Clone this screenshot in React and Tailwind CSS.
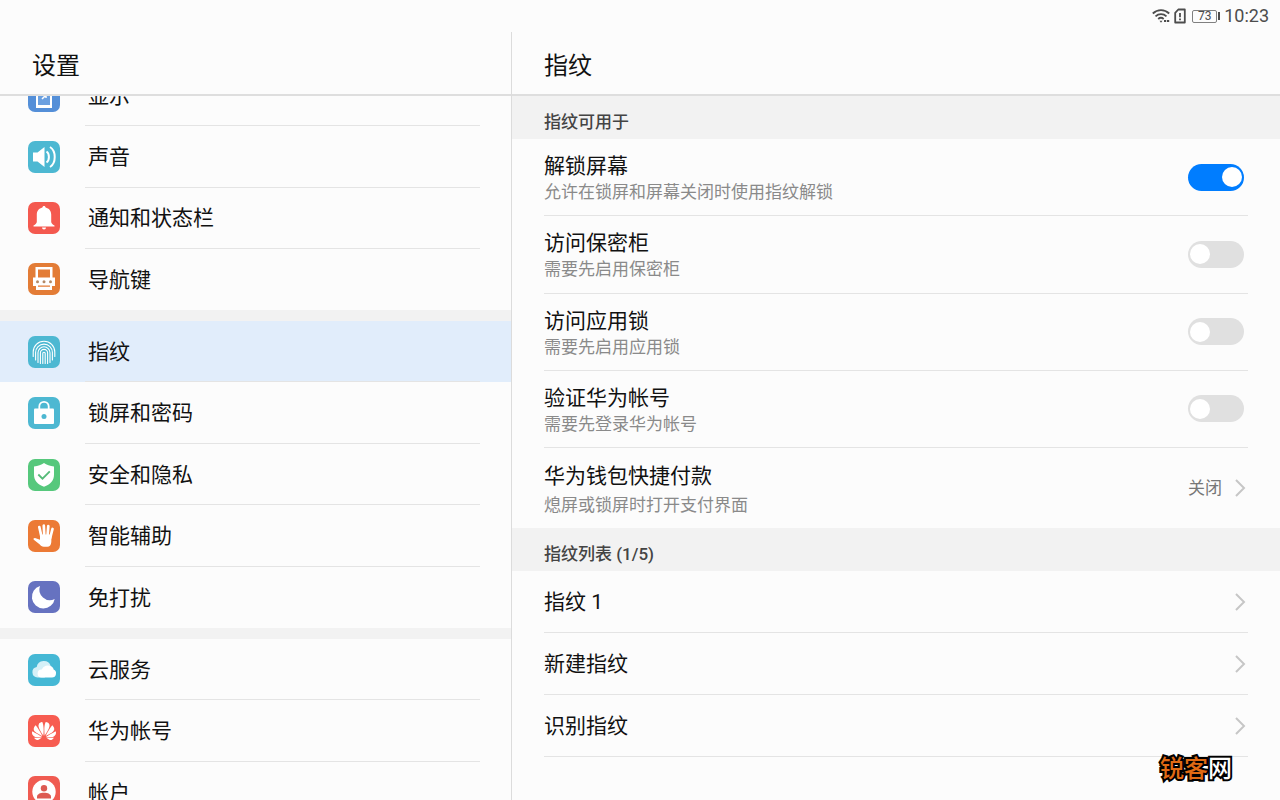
import { SiHuawei } from 'react-icons/si';
import clsx from 'clsx';

const icons = {
    display: (
        <>
            <path d="M8 4h16v24H8z" fill="#fff" />
            <path d="M10 6h12v19H10z" fill="#6ba0e0" />
            <path d="M14 19l4-4v3" stroke="#fff" strokeWidth="1.5" />
        </>
    ),
    sound: (
        <>
            <path d="M5 11.5h4.500L16.500 6v20L9.500 20.500H5z" fill="#fff" />
            <path d="M18.500 10.500c3.200 2 3.200 9 0 11M22 6c6.300 4 6.300 16 0 20" stroke="#fff" strokeWidth="2" />
        </>
    ),
    bell: (
        <g fill="#fff">
            <path d="M16 4c.9 0 1.500.7 1.600 1.600 3.500.8 5.600 3.400 5.600 7v7.200c0 1.600 1.200 2.600 3.300 3.700v1H5.500v-1c2.100-1.100 3.300-2.100 3.300-3.700v-7.200c0-3.600 2.100-6.200 5.600-7C14.500 4.700 15.100 4 16 4z" />
            <path d="M14 25.600h4a2 2 0 0 1-4 0z" />
        </g>
    ),
    keys: (
        <>
            <path d="M7.500 4h17v10.500H27V23h-3v4H8v-4H5v-8.500h2.500z" fill="#fff" />
            <path d="M10 6.500h12v8H10zM10 22.500h12v1.200H10z" fill="#e37c36" />
            <g fill="#b58a66">
                <circle cx="9.500" cy="18.700" r="1.500" />
                <circle cx="16" cy="18.700" r="1.500" />
                <circle cx="22.500" cy="18.700" r="1.500" />
            </g>
        </>
    ),
    fingerprint: (
        <path
            d="M5.200 20.500V16a10.800 10.800 0 0 1 21.600 0v4.500M7.600 24v-7.500a8.400 8.400 0 0 1 16.800 0V24M10 26.500v-9.700a6 6 0 0 1 12 0v9.700M12.400 27.500V17a3.600 3.600 0 0 1 7.200 0v10.500M14.800 27.500V17.500a1.200 1.200 0 0 1 2.400 0v10"
            stroke="#fff"
            strokeWidth="1.100"
            strokeLinecap="round"
        />
    ),
    lock: (
        <>
            <rect x="6" y="11.500" width="20" height="15.500" rx="1" fill="#fff" />
            <path d="M11.300 12V9.500a4.700 4.700 0 0 1 9.400 0V12" stroke="#fff" strokeWidth="1.800" />
            <circle cx="16" cy="19.600" r="2.500" fill="#4db8d2" />
        </>
    ),
    shield: (
        <>
            <path d="M16 4c2.500 2 6 3 10 3.400v8.200c0 6-3.600 10-10 12.200-6.400-2.200-10-6.200-10-12.200V7.400C10 7 13.500 6 16 4z" fill="#fff" />
            <path d="M10.300 15.500l4.200 4.200 7.300-7.400" stroke="#56bb79" strokeWidth="1.800" />
        </>
    ),
    hand: (
        <g stroke="#fff" strokeLinecap="round">
            <path d="M11.300 7l2 9M15.800 5.700l.5 10M20.300 6.200l-.8 10M24.500 9l-2.300 9" strokeWidth="2.700" />
            <path
                d="M12 14.500h11.500l-.2 7.500c-.2 3-1.500 4.700-4 4.700h-3.500c-2 0-3-.9-4.300-2.500l-5.700-4.500c-.8-.8 0-1.800 1.200-1.700l5 1.800z"
                fill="#fff"
                stroke="none"
            />
        </g>
    ),
    moon: <path d="M12 5A11.500 11.500 0 1 0 26.700 18 10.600 10.600 0 0 1 12 5z" fill="#fff" />,
    cloud: (
        <>
            <path d="M9.500 23.500a5.300 5.300 0 0 1-.8-10.500 7.200 7.200 0 0 1 14-1l-6 11.500z" fill="#d5f0f7" />
            <path d="M13.500 23.500a4 4 0 0 1 .2-8 6.800 6.800 0 0 1 9.500-3.200c1.500.8 2.200 1.900 2.400 3.200a4.200 4.200 0 0 1-1.600 8z" fill="#fff" />
        </>
    ),
    account: (
        <>
            <circle cx="16" cy="15.800" r="11.700" fill="#fff" />
            <circle cx="16" cy="12.300" r="3.200" fill="#dd5a52" />
            <path d="M9 22.500v-1.700c0-2.500 3-4 7-4s7 1.500 7 4v1.700z" fill="#dd5a52" />
        </>
    ),
};

const groups = [
    {
        height: 'min-h-[245px]',
        items: [
            { label: '显示', icon: 'display', color: 'bg-[#548fd8]' },
            { label: '声音', icon: 'sound', color: 'bg-[#4db8d2]' },
            { label: '通知和状态栏', icon: 'bell', color: 'bg-[#f4594f]' },
            { label: '导航键', icon: 'keys', color: 'bg-[#e37c36]' },
        ],
    },
    {
        height: 'min-h-[307px]',
        items: [
            { label: '指纹', icon: 'fingerprint', color: 'bg-[#4db8d2]', active: true },
            { label: '锁屏和密码', icon: 'lock', color: 'bg-[#4db8d2]' },
            { label: '安全和隐私', icon: 'shield', color: 'bg-[#56c87c]' },
            { label: '智能辅助', icon: 'hand', color: 'bg-[#ec7a35]' },
            { label: '免打扰', icon: 'moon', color: 'bg-[#6672c0]' },
        ],
    },
    {
        height: 'min-h-[184px]',
        items: [
            { label: '云服务', icon: 'cloud', color: 'bg-[#45b8d5]' },
            { label: '华为帐号', icon: 'huawei', color: 'bg-[#f75c51]' },
            { label: '帐户', icon: 'account', color: 'bg-[#f05b51]' },
        ],
    },
];

const switches = [
    { id: 'unlock', title: '解锁屏幕', hint: '允许在锁屏和屏幕关闭时使用指纹解锁', on: true },
    { id: 'safe', title: '访问保密柜', hint: '需要先启用保密柜' },
    { id: 'applock', title: '访问应用锁', hint: '需要先启用应用锁' },
    { id: 'account', title: '验证华为帐号', hint: '需要先登录华为帐号' },
];

function StatusBar() {
    return (
        <div className="flex h-8 shrink-0 items-center justify-end pr-[11px] text-[#4d4d4d]">
            <svg className="h-4 w-[18px]" viewBox="0 0 18 16" fill="none" stroke="currentColor" strokeWidth="1.800">
                <path d="M.8 5.500c4.700-4.600 11.700-4.600 16.400 0M3.500 8.300c3.200-3 7.800-3 11 0M6.200 11c1.700-1.500 3.800-1.500 5.500 0" />
                <path d="M7.500 12.800h3l-1.500 2z" fill="currentColor" stroke="none" />
                <path d="M12 13h2.200M15 13h2.200" strokeWidth="2" />
            </svg>
            <svg className="ml-1 h-4 w-3" viewBox="0 0 12 16" fill="none" stroke="currentColor" strokeWidth="1.800">
                <path d="M4.300 1.500H10.800v13H1.200V4.800z" strokeLinejoin="round" />
                <path d="M6 5v4.300M6 10.500v1.700" />
            </svg>
            <div className="ml-[6px] flex items-center">
                <span className="flex h-[13px] w-[25px] items-center justify-center rounded-[2px] border border-[#808080] text-xs">73</span>
                <span className="ml-px h-2 w-[2px] bg-[#4d4d4d]" />
            </div>
            <span className="ml-1 text-lg leading-8">10:23</span>
        </div>
    );
}

function MenuItem({ item, last }) {
    return (
        <a href="#" className={clsx('flex flex-1 items-center pl-7', item.active && 'bg-[#e1edfb]')}>
            <span className={clsx('flex size-8 shrink-0 items-center justify-center rounded-[7px]', item.color)}>
                {item.icon === 'huawei' ? (
                    <SiHuawei className="size-6 text-white" />
                ) : (
                    <svg className="size-8" viewBox="0 0 32 32" fill="none">
                        {icons[item.icon]}
                    </svg>
                )}
            </span>
            <span
                className={clsx(
                    'mr-[31px] ml-[25px] flex flex-1 items-center self-stretch border-b pt-[3px] pl-[3px]',
                    last ? 'border-transparent' : 'border-[#e4e4e4]'
                )}
            >
                {item.label}
            </span>
        </a>
    );
}

function Sidebar() {
    return (
        <aside className="flex w-2/5 flex-col border-r border-[#dcdcdc]">
            <h1 className="flex h-16 shrink-0 items-center border-b-2 border-[#dedede] px-8 pt-[6px] text-2xl">设置</h1>
            <nav className="flex-1 overflow-hidden">
                {/* the list is scrolled down a little */}
                <div className="-mt-[31px] flex flex-col gap-[11px] bg-[#f2f2f2]">
                    {groups.map((group, i) => (
                        <div key={i} className={clsx('flex flex-col bg-[#fcfcfc]', group.height)}>
                            {group.items.map((item, n) => (
                                <MenuItem key={item.label} item={item} last={n === group.items.length - 1} />
                            ))}
                        </div>
                    ))}
                </div>
            </nav>
        </aside>
    );
}

function SectionTitle({ children }) {
    return (
        <h3 className="flex h-[43px] items-center bg-[#f2f2f2] px-8 pt-[10px] text-[17px] font-medium text-[#444]">{children}</h3>
    );
}

function Chevron() {
    return (
        <svg className="mr-[2px] h-5 w-3" viewBox="0 0 12 20" fill="none" stroke="#c6c6c6" strokeWidth="2">
            <path d="M2 2l8 8-8 8" />
        </svg>
    );
}

function SwitchRow({ row }) {
    return (
        <div className="flex flex-1 items-center justify-between border-b border-[#e4e4e4]">
            <label htmlFor={row.id} className="pt-[2px]">
                <span className="block leading-7">{row.title}</span>
                <span className="block text-[17px] leading-6 text-[#8a8a8a]">{row.hint}</span>
            </label>
            <input
                id={row.id}
                type="checkbox"
                role="switch"
                defaultChecked={row.on}
                className="mr-1 flex h-[27px] w-14 shrink-0 cursor-pointer appearance-none items-center rounded-full bg-[#e0e0e0] px-[2px] before:size-5 before:rounded-full before:bg-white checked:justify-end checked:bg-[#007dff]"
            />
        </div>
    );
}

function LinkRow({ label }) {
    return (
        <button className="flex h-[62px] w-full items-center justify-between border-b border-[#e4e4e4] text-left">
            <span className="pt-[2px]">{label}</span>
            <Chevron />
        </button>
    );
}

export default function App() {
    return (
        <div className="relative flex h-screen flex-col overflow-hidden bg-[#fcfcfc] font-['Roboto','Noto_Sans_CJK_SC',sans-serif] text-[21px] text-[#111]">
            <StatusBar />
            <div className="flex min-h-0 flex-1">
                <Sidebar />
                <main className="flex-1 overflow-hidden">
                    <h2 className="flex h-16 items-center border-b-2 border-[#dedede] px-8 pt-[6px] text-2xl">指纹</h2>
                    <SectionTitle>指纹可用于</SectionTitle>
                    <div className="flex min-h-[309px] flex-col px-8">
                        {switches.map((row) => (
                            <SwitchRow key={row.id} row={row} />
                        ))}
                    </div>
                    <button className="flex h-20 w-full items-center px-8 text-left">
                        <span className="flex-1 pt-[2px]">
                            <span className="block leading-7">华为钱包快捷付款</span>
                            <span className="mt-[3px] block text-[17px] leading-6 text-[#8a8a8a]">熄屏或锁屏时打开支付界面</span>
                        </span>
                        <span className="mr-3 pt-[2px] text-[17px] text-[#777]">关闭</span>
                        <Chevron />
                    </button>
                    <SectionTitle>指纹列表 (1/5)</SectionTitle>
                    <div className="px-8">
                        <LinkRow label="指纹 1" />
                        <LinkRow label="新建指纹" />
                        <LinkRow label="识别指纹" />
                    </div>
                </main>
            </div>
            <div className="absolute right-12 bottom-[15px] text-2xl font-medium text-white [-webkit-text-stroke:4px_#000] [paint-order:stroke]">
                <span className="text-[#e06a14]">锐客</span>网
            </div>
        </div>
    );
}
